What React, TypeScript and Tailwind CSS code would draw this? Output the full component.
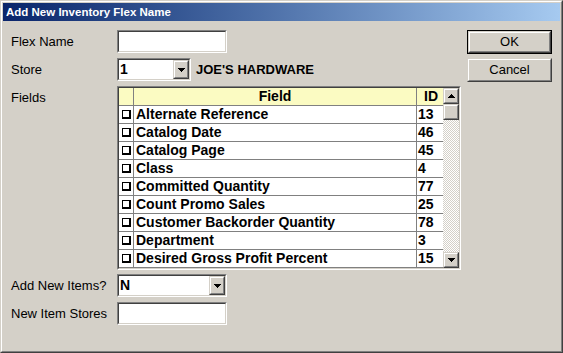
import type { ReactNode } from "react"

const FIELDS: { name: string; id: number }[] = [
  { name: "Alternate Reference", id: 13 },
  { name: "Catalog Date", id: 46 },
  { name: "Catalog Page", id: 45 },
  { name: "Class", id: 4 },
  { name: "Committed Quantity", id: 77 },
  { name: "Count Promo Sales", id: 25 },
  { name: "Customer Backorder Quantity", id: 78 },
  { name: "Department", id: 3 },
  { name: "Desired Gross Profit Percent", id: 15 },
]

// classic 3D sunken edit box
function Sunken({ className = "", children }: { className?: string; children?: ReactNode }) {
  return (
    <div className={`border border-t-[#808080] border-l-[#808080] border-b-white border-r-white ${className}`}>
      <div className="h-full w-full border border-t-[#404040] border-l-[#404040] border-b-[#d4d0c8] border-r-[#d4d0c8] bg-white flex">
        {children}
      </div>
    </div>
  )
}

function Raised({ className = "", children }: { className?: string; children?: ReactNode }) {
  return (
    <div className={`border border-t-[#d4d0c8] border-l-[#d4d0c8] border-b-[#404040] border-r-[#404040] ${className}`}>
      <div className="h-full w-full border border-t-white border-l-white border-b-[#808080] border-r-[#808080] bg-[#d4d0c8] flex items-center justify-center">
        {children}
      </div>
    </div>
  )
}

function Arrow({ up = false }: { up?: boolean }) {
  return (
    <svg width="7" height="4" viewBox="0 0 7 4" shapeRendering="crispEdges">
      {up ? (
        <>
          <rect x="3" y="0" width="1" height="1" fill="#000" />
          <rect x="2" y="1" width="3" height="1" fill="#000" />
          <rect x="1" y="2" width="5" height="1" fill="#000" />
          <rect x="0" y="3" width="7" height="1" fill="#000" />
        </>
      ) : (
        <>
          <rect x="0" y="0" width="7" height="1" fill="#000" />
          <rect x="1" y="1" width="5" height="1" fill="#000" />
          <rect x="2" y="2" width="3" height="1" fill="#000" />
          <rect x="3" y="3" width="1" height="1" fill="#000" />
        </>
      )}
    </svg>
  )
}

function Combo({ value, className = "" }: { value: string; className?: string }) {
  return (
    <Sunken className={`h-[23px] ${className}`}>
      <div className="flex-1 pl-[1px] text-[14px] font-bold leading-[19px]">{value}</div>
      <Raised className="w-[16px] h-[19px]">
        <Arrow />
      </Raised>
    </Sunken>
  )
}

function Label({ children }: { children: ReactNode }) {
  return <div className="h-[23px] leading-[23px] text-[13px] text-black">{children}</div>
}

export default function App() {
  return (
    <div
      className="w-[563px] h-[353px] border border-t-[#d4d0c8] border-l-[#d4d0c8] border-b-[#404040] border-r-[#404040] bg-[#d4d0c8]"
      style={{ fontFamily: '"Liberation Sans", Arial, sans-serif' }}
    >
      <div className="h-full w-full border border-t-white border-l-white border-b-[#808080] border-r-[#808080] p-[1px] flex flex-col">
        <div className="h-[18px] bg-gradient-to-r from-[#0a246a] to-[#a6caf0] pl-[3px] text-[11.5px] font-bold leading-[18px] text-white">
          Add New Inventory Flex Name
        </div>

        <div className="flex pt-[9px] pl-[8px]">
          <div className="w-[449px] grid grid-cols-[106px_auto] gap-y-[5px]">
            <Label>Flex Name</Label>
            <Sunken className="w-[110px] h-[23px]" />

            <Label>Store</Label>
            <div className="flex items-center gap-[5px]">
              <Combo value="1" className="w-[74px]" />
              <span className="text-[13px] font-bold">JOE&apos;S HARDWARE</span>
            </div>

            <Label>Fields</Label>
            <Sunken className="w-[344px] h-[184px]">
              <div className="w-[324px] flex flex-col text-[14px] font-bold text-black">
                <div className="flex h-[18px] bg-[#fbfbc2] border-b border-[#808080]">
                  <div className="w-[15px] border-r border-[#808080]" />
                  <div className="w-[283px] border-r border-[#808080] text-center leading-[17px]">Field</div>
                  <div className="w-[26px] text-center pl-[2px] leading-[17px]">ID</div>
                </div>
                {FIELDS.map((f) => (
                  <div key={f.name} className="flex h-[18px] border-b border-[#808080]">
                    <div className="w-[15px] border-r border-[#808080] flex items-center justify-center">
                      <div className="w-[9px] h-[9px] border border-black border-r-2 border-b-2 bg-white" />
                    </div>
                    <div className="w-[283px] border-r border-[#808080] pl-[2px] leading-[17px] whitespace-nowrap overflow-hidden">
                      {f.name}
                    </div>
                    <div className="w-[26px] pl-[1px] leading-[17px]">{f.id}</div>
                  </div>
                ))}
              </div>
              <div className="w-[16px] flex flex-col">
                <Raised className="w-[16px] h-[16px]">
                  <Arrow up />
                </Raised>
                <Raised className="w-[16px] h-[16px]" />
                <div className="flex-1 bg-[repeating-conic-gradient(#d4d0c8_0_25%,#ffffff_0_50%)] bg-[length:2px_2px]" />
                <Raised className="w-[16px] h-[16px]">
                  <Arrow />
                </Raised>
              </div>
            </Sunken>

            <div className="-mt-[1px]">
              <Label>Add New Items?</Label>
            </div>
            <Combo value="N" className="w-[110px] -mt-[1px]" />

            <Label>New Item Stores</Label>
            <Sunken className="w-[110px] h-[23px]" />
          </div>

          <div className="ml-[7px] flex flex-col gap-[4px]">
            <div className="w-[85px] h-[24px] border border-black">
              <Raised className="w-full h-full">
                <span className="text-[13px] text-black">OK</span>
              </Raised>
            </div>
            <Raised className="w-[85px] h-[24px]">
              <span className="text-[13px] text-black">Cancel</span>
            </Raised>
          </div>
        </div>
      </div>
    </div>
  )
}
